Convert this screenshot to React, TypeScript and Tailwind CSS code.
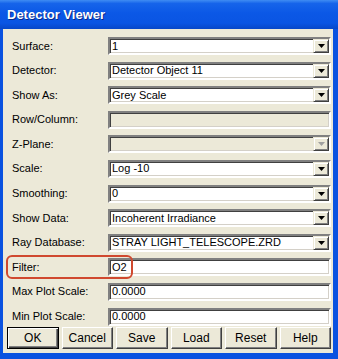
import React from 'react'

type Row = {
  label: string
  value: string
  kind: 'combo' | 'text' | 'disabled' | 'disabledCombo'
  highlight?: boolean
}

const rows: Row[] = [
  { label: 'Surface:', value: '1', kind: 'combo' },
  { label: 'Detector:', value: 'Detector Object 11', kind: 'combo' },
  { label: 'Show As:', value: 'Grey Scale', kind: 'combo' },
  { label: 'Row/Column:', value: '', kind: 'disabled' },
  { label: 'Z-Plane:', value: '', kind: 'disabledCombo' },
  { label: 'Scale:', value: 'Log -10', kind: 'combo' },
  { label: 'Smoothing:', value: '0', kind: 'combo' },
  { label: 'Show Data:', value: 'Incoherent Irradiance', kind: 'combo' },
  { label: 'Ray Database:', value: 'STRAY LIGHT_TELESCOPE.ZRD', kind: 'combo' },
  { label: 'Filter:', value: 'O2', kind: 'text', highlight: true },
  { label: 'Max Plot Scale:', value: '0.0000', kind: 'text' },
  { label: 'Min Plot Scale:', value: '0.0000', kind: 'text' },
]

const buttons = ['OK', 'Cancel', 'Save', 'Load', 'Reset', 'Help']

function DropButton({ disabled }: { disabled?: boolean }) {
  return (
    <div className="flex h-full w-[16px] shrink-0 items-center justify-center border border-t-[#ece9d8] border-l-[#ece9d8] border-b-[#404040] border-r-[#404040] bg-[#ece9d8] shadow-[inset_1px_1px_0_#ffffff,inset_-1px_-1px_0_#808080]">
      <svg width="7" height="4" viewBox="0 0 7 4">
        <path d="M0 0h7L3.5 4z" fill={disabled ? '#a0a0a0' : '#000000'} />
      </svg>
    </div>
  )
}

function Field({ row }: { row: Row }) {
  const disabled = row.kind === 'disabled' || row.kind === 'disabledCombo'
  return (
    <div
      className={`flex h-[18px] flex-1 items-center border-2 border-t-[#808080] border-l-[#808080] border-b-[#ffffff] border-r-[#ffffff] shadow-[inset_1px_1px_0_#404040,inset_-1px_-1px_0_#d4d0c8] ${
        disabled ? 'bg-[#ece9d8]' : 'bg-white'
      }`}
    >
      <span className="flex-1 truncate pl-[2px] text-[11px] leading-none text-black">{row.value}</span>
      {(row.kind === 'combo' || row.kind === 'disabledCombo') && (
        <div className="h-full py-0">
          <DropButton disabled={row.kind === 'disabledCombo'} />
        </div>
      )}
    </div>
  )
}

export default function App() {
  return (
    <div
      className="flex h-[359px] w-[338px] flex-col bg-[#0a52e0] text-black"
      style={{ fontFamily: '"Liberation Sans", Arial, sans-serif' }}
    >
      <div className="flex h-[29px] shrink-0 items-center bg-[linear-gradient(to_bottom,#3f8cf3_0%,#1664ea_12%,#0b58e6_45%,#0a55e3_80%,#0747c8_100%)] pl-[7px]">
        <span className="text-[13px] font-bold text-white [text-shadow:1px_1px_0_#0a2a8a]">
          Detector Viewer
        </span>
      </div>

      <div className="mb-[6px] ml-[3px] mr-[5px] flex flex-1 flex-col bg-[#ece9d8]">
        <div className="flex flex-col gap-y-[6.6px] pl-[9px] pr-[2px] pt-[8px]">
          {rows.map((row) => (
            <div key={row.label} className="relative flex h-[18px] items-center">
              <span className="w-[96px] shrink-0 text-[11px] leading-none text-black">{row.label}</span>
              <Field row={row} />
              {row.highlight && (
                <div className="pointer-events-none absolute left-[-6px] top-[-3px] h-[24px] w-[127px] rounded-[6px] border-2 border-[#d0492f]" />
              )}
            </div>
          ))}
        </div>

        <div className="mt-[1.5px] flex gap-[3px] pl-[4px] pr-[2px]">
          {buttons.map((b) => (
            <div
              key={b}
              className={`flex h-[22px] flex-1 items-center justify-center bg-[#ece9d8] text-[12px] text-black ${
                b === 'OK'
                  ? 'border border-black shadow-[inset_1px_1px_0_#ffffff,inset_-1px_-1px_0_#404040,inset_-2px_-2px_0_#808080]'
                  : 'border border-t-white border-l-white border-b-[#404040] border-r-[#404040] shadow-[inset_-1px_-1px_0_#808080]'
              }`}
            >
              {b}
            </div>
          ))}
        </div>
      </div>
    </div>
  )
}
